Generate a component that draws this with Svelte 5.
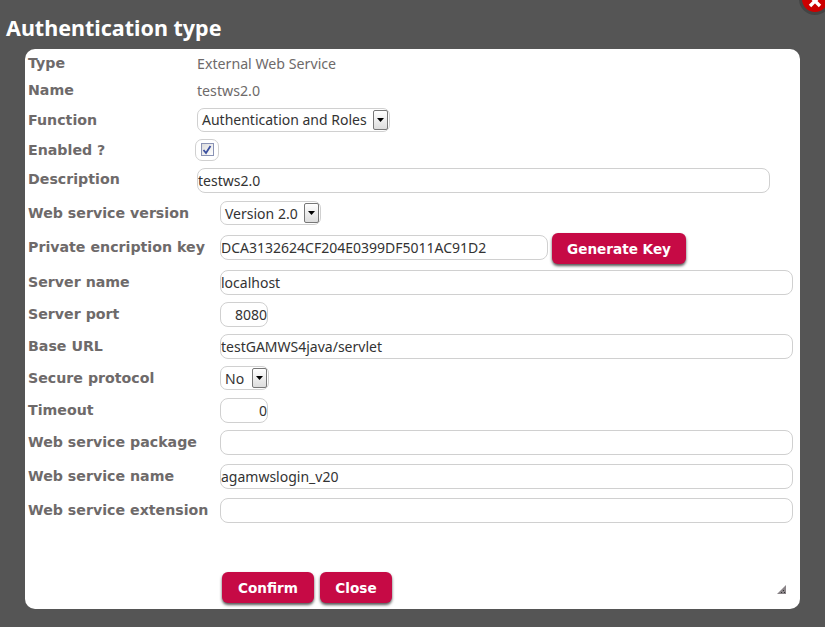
<script lang="ts">
	const infoRows = [
		{ label: 'Type', value: 'External Web Service' },
		{ label: 'Name', value: 'testws2.0' }
	];

	interface Field {
		label: string;
		kind: 'input' | 'select' | 'key';
		value: string;
		pitch: number;
		size?: string;
	}

	const fields: Field[] = [
		{ label: 'Web service version', kind: 'select', value: 'Version 2.0', pitch: 34 },
		{ label: 'Private encription key', kind: 'key', value: 'DCA3132624CF204E0399DF5011AC91D2', pitch: 35 },
		{ label: 'Server name', kind: 'input', value: 'localhost', pitch: 32 },
		{ label: 'Server port', kind: 'input', value: '8080', size: 'num', pitch: 32 },
		{ label: 'Base URL', kind: 'input', value: 'testGAMWS4java/servlet', pitch: 32 },
		{ label: 'Secure protocol', kind: 'select', value: 'No', pitch: 32 },
		{ label: 'Timeout', kind: 'input', value: '0', size: 'num', pitch: 32 },
		{ label: 'Web service package', kind: 'input', value: '', pitch: 34 },
		{ label: 'Web service name', kind: 'input', value: 'agamwslogin_v20', pitch: 34 },
		{ label: 'Web service extension', kind: 'input', value: '', pitch: 25 }
	];
</script>

{#snippet selectBox(text: string)}
	<span class="select">
		<span class="select-text">{text}</span>
		<span class="select-arrow">
			<svg width="7" height="4" viewBox="0 0 7 4"><path d="M0 0h7L3.5 4z" fill="#000" /></svg>
		</span>
	</span>
{/snippet}

<div class="dialog">
	<a class="close-btn" href="#close" aria-label="Close">
		<svg width="14" height="14" viewBox="0 0 14 14">
			<path d="M2 2l10 10M12 2L2 12" stroke="#fff" stroke-width="3.4" />
		</svg>
	</a>
	<h1>Authentication type</h1>

	<div class="panel">
		<div class="top-table">
			{#each infoRows as row}
				<div class="row info">
					<span class="label">{row.label}</span>
					<span class="readonly">{row.value}</span>
				</div>
			{/each}
			<div class="row fn">
				<span class="label">Function</span>
				{@render selectBox('Authentication and Roles')}
			</div>
			<div class="row en">
				<span class="label">Enabled ?</span>
				<span class="check-wrap">
					<span class="check">
						<svg width="10" height="10" viewBox="0 0 10 10">
							<path d="M1.5 5l2.5 3L8.5 1" fill="none" stroke="#3a4fa0" stroke-width="1.8" />
						</svg>
					</span>
				</span>
			</div>
			<div class="row desc">
				<span class="label">Description</span>
				<input class="text" readonly value="testws2.0" />
			</div>
		</div>

		<div class="form-table">
			{#each fields as f}
				<div class="row" style="height: {f.pitch}px">
					<span class="label">{f.label}</span>
					{#if f.kind === 'select'}
						{@render selectBox(f.value)}
					{:else if f.kind === 'key'}
						<div class="key-line">
							<input class="text key" readonly value={f.value} />
							<button class="btn gen">Generate Key</button>
						</div>
					{:else}
						<input class="text" class:num={f.size === 'num'} readonly value={f.value} />
					{/if}
				</div>
			{/each}
		</div>

		<div class="actions">
			<button class="btn confirm">Confirm</button>
			<button class="btn close">Close</button>
		</div>

		<svg class="grip" width="9" height="9" viewBox="0 0 9 9">
			<path d="M9 0v9H0z" fill="#8a8488" />
			<path d="M4 7h1v1H4zM6 5h1v1H6zM7 7h1v1H7z" fill="#333" />
		</svg>
	</div>
</div>

<style>
	:global(body) {
		margin: 0;
		background: #555;
	}

	.dialog {
		position: relative;
		width: 825px;
		height: 627px;
		overflow: hidden;
		box-sizing: border-box;
		padding: 13px 25px 0;
		background: #555;
		font-family: 'Noto Sans', sans-serif;
	}

	h1 {
		margin: 0 0 0 -19px;
		height: 36px;
		color: #fff;
		font-size: 21.5px;
		line-height: 29px;
		font-weight: bold;
	}

	.close-btn {
		position: absolute;
		left: 799px;
		top: -17px;
		display: flex;
		align-items: center;
		justify-content: center;
		box-sizing: border-box;
		width: 32px;
		height: 32px;
		padding-top: 4px;
		background: #c00;
		border: 3px solid #444;
		border-radius: 50%;
	}

	.panel {
		position: relative;
		width: 775px;
		height: 560px;
		box-sizing: border-box;
		padding: 1px 0 0 3px;
		background: #fff;
		border-radius: 10px;
	}

	.top-table .row {
		display: grid;
		grid-template-columns: 169px 1fr;
		align-items: center;
	}

	.info {
		height: 27px;
	}

	.fn {
		height: 31px;
	}

	.en {
		height: 29px;
	}

	.desc {
		height: 33px;
	}

	.form-table {
		margin-top: 4px;
	}

	.form-table .row {
		display: grid;
		grid-template-columns: 192px 1fr;
		align-items: start;
	}

	.form-table .label {
		top: 2px;
	}

	.label {
		position: relative;
		color: #6e6a6a;
		font-family: 'DejaVu Sans', sans-serif;
		font-size: 14.2px;
		line-height: 20px;
		font-weight: bold;
		white-space: nowrap;
	}

	.info .label {
		top: -1px;
	}

	.desc .label {
		top: -2px;
	}

	.readonly {
		color: #6e6a6a;
		font-size: 14.2px;
	}

	.text {
		box-sizing: border-box;
		width: 573px;
		height: 25px;
		padding: 0;
		color: #333;
		background: #fff;
		border: 1px solid #d0d0d0;
		border-radius: 8px;
		outline: none;
		font-family: inherit;
		font-size: 14px;
	}

	.text.num {
		width: 48px;
		text-align: right;
	}

	.key-line {
		display: flex;
		align-items: flex-start;
		gap: 4px;
	}

	.text.key {
		width: 328px;
	}

	.select {
		display: inline-flex;
		align-items: center;
		justify-content: space-between;
		justify-self: start;
		box-sizing: border-box;
		min-width: 49px;
		height: 24px;
		padding: 0 1px 0 4px;
		gap: 6px;
		color: #333;
		border: 1px solid #d0d0d0;
		border-radius: 7px;
		font-size: 14px;
	}

	.select-arrow {
		display: flex;
		align-items: center;
		justify-content: center;
		box-sizing: border-box;
		width: 15px;
		height: 20px;
		background: linear-gradient(#fff, #ddd);
		border: 1px solid #777;
		border-radius: 2px;
	}

	.check-wrap {
		display: flex;
		align-items: center;
		justify-content: center;
		justify-self: start;
		box-sizing: border-box;
		width: 24px;
		height: 22px;
		margin-left: -2px;
		border: 1px solid #d0d0d0;
		border-radius: 7px;
	}

	.check {
		display: flex;
		align-items: center;
		justify-content: center;
		box-sizing: border-box;
		width: 13px;
		height: 13px;
		background: linear-gradient(135deg, #dcdcdc, #fff);
		border: 1px solid #8a93b5;
	}

	.btn {
		padding: 0;
		height: 31px;
		color: #fff;
		background: #c60a45;
		border: none;
		border-radius: 6px;
		box-shadow: 0 2px 3px #555;
		font-family: 'DejaVu Sans', sans-serif;
		font-size: 13.6px;
		font-weight: bold;
	}

	.gen {
		width: 134px;
		margin-top: -2px;
	}

	.confirm {
		width: 92px;
	}

	.close {
		width: 72px;
	}

	.actions {
		position: absolute;
		left: 197px;
		top: 523px;
		display: flex;
		gap: 6px;
	}

	.grip {
		position: absolute;
		right: 14px;
		bottom: 15px;
	}
</style>
